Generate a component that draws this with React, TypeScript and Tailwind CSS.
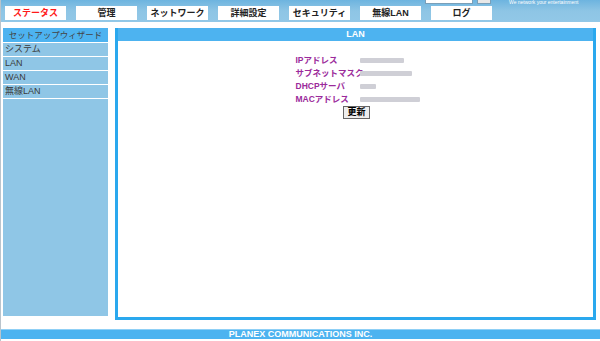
import React from "react";

const tabs = ["ステータス", "管理", "ネットワーク", "詳細設定", "セキュリティ", "無線LAN", "ログ"];
const menu = ["システム", "LAN", "WAN", "無線LAN"];
const rows = [
  { label: "IPアドレス", w: "w-[44px]" },
  { label: "サブネットマスク", w: "w-[52px]" },
  { label: "DHCPサーバ", w: "w-[16px]" },
  { label: "MACアドレス", w: "w-[60px]" },
];

export default function App() {
  return (
    <div
      className="relative h-[341px] w-[600px] overflow-hidden border-l border-[#b9c4cc] bg-white"
      style={{ fontFamily: '"Liberation Sans", "Noto Sans CJK JP", sans-serif' }}
    >
      {/* top bar */}
      <div className="relative h-[22px] bg-gradient-to-b from-[#6db4df] via-[#8ec5e5] to-[#92c8e7]">
        <div className="flex gap-[10px] pl-[4px] pt-[6px]">
          {tabs.map((t, i) => (
            <div
              key={t}
              className={`flex h-[14px] w-[61px] items-center justify-center whitespace-nowrap bg-white text-[9px] font-bold leading-none ${
                i === 0 ? "text-[#ff1a1a]" : "text-[#222]"
              }`}
            >
              {t}
            </div>
          ))}
        </div>
        {/* search strip at the very top */}
        <div className="absolute left-[424px] top-0 h-[4px] w-[48px] border border-t-0 border-[#7a9fb8] bg-white" />
        <div className="absolute left-[476px] top-0 h-[4px] w-[14px] border border-t-0 border-[#7a9fb8] bg-[#e8e8e8]" />
        <div className="absolute left-[508px] top-0 whitespace-nowrap text-[5px] leading-none text-white">
          We network your entertainment
        </div>
      </div>

      {/* body */}
      <div className="flex gap-[7px] pl-[2px] pt-[6px]">
        <aside className="flex h-[288px] w-[105px] flex-col bg-[#8fc6e6]">
          <div className="flex h-[15px] items-center justify-center whitespace-nowrap border-b border-white bg-[#4db3f0] text-[8.5px] leading-none text-[#444]">
            セットアップウィザード
          </div>
          {menu.map((m) => (
            <div
              key={m}
              className="flex h-[14px] items-center border-b border-white pl-[2px] text-[9px] leading-none text-[#3a3a3a]"
            >
              {m}
            </div>
          ))}
        </aside>

        <section className="flex h-[292px] w-[481px] flex-col border-[3px] border-t-0 border-[#2aa8ee] bg-white">
          <div className="flex h-[13px] items-center justify-center bg-[#4db3f0] text-[9px] font-bold leading-none text-white">
            LAN
          </div>
          <div className="flex flex-col items-center pt-[14px]">
            <div className="flex flex-col gap-[3px] pl-[4px]">
              {rows.map((r) => (
                <div key={r.label} className="flex h-[10px] items-center">
                  <span className="w-[64px] whitespace-nowrap text-[8.5px] font-bold leading-none text-[#9b2a9b]">
                    {r.label}
                  </span>
                  <span className={`h-[5px] ${r.w} rounded-[1px] bg-[#cfcfd6] blur-[0.7px]`} />
                </div>
              ))}
            </div>
            <button className="mt-[2px] ml-[2px] h-[13px] border border-[#666] bg-[#eeeeee] px-[3px] text-[9px] font-bold leading-none text-black">
              更新
            </button>
          </div>
        </section>
      </div>

      {/* footer */}
      <div className="mt-[9px] flex h-[10px] items-center justify-center border-t border-[#8fd0f6] bg-[#4db3f0] text-[9px] font-bold leading-none text-white">
        PLANEX COMMUNICATIONS INC.
      </div>
    </div>
  );
}
